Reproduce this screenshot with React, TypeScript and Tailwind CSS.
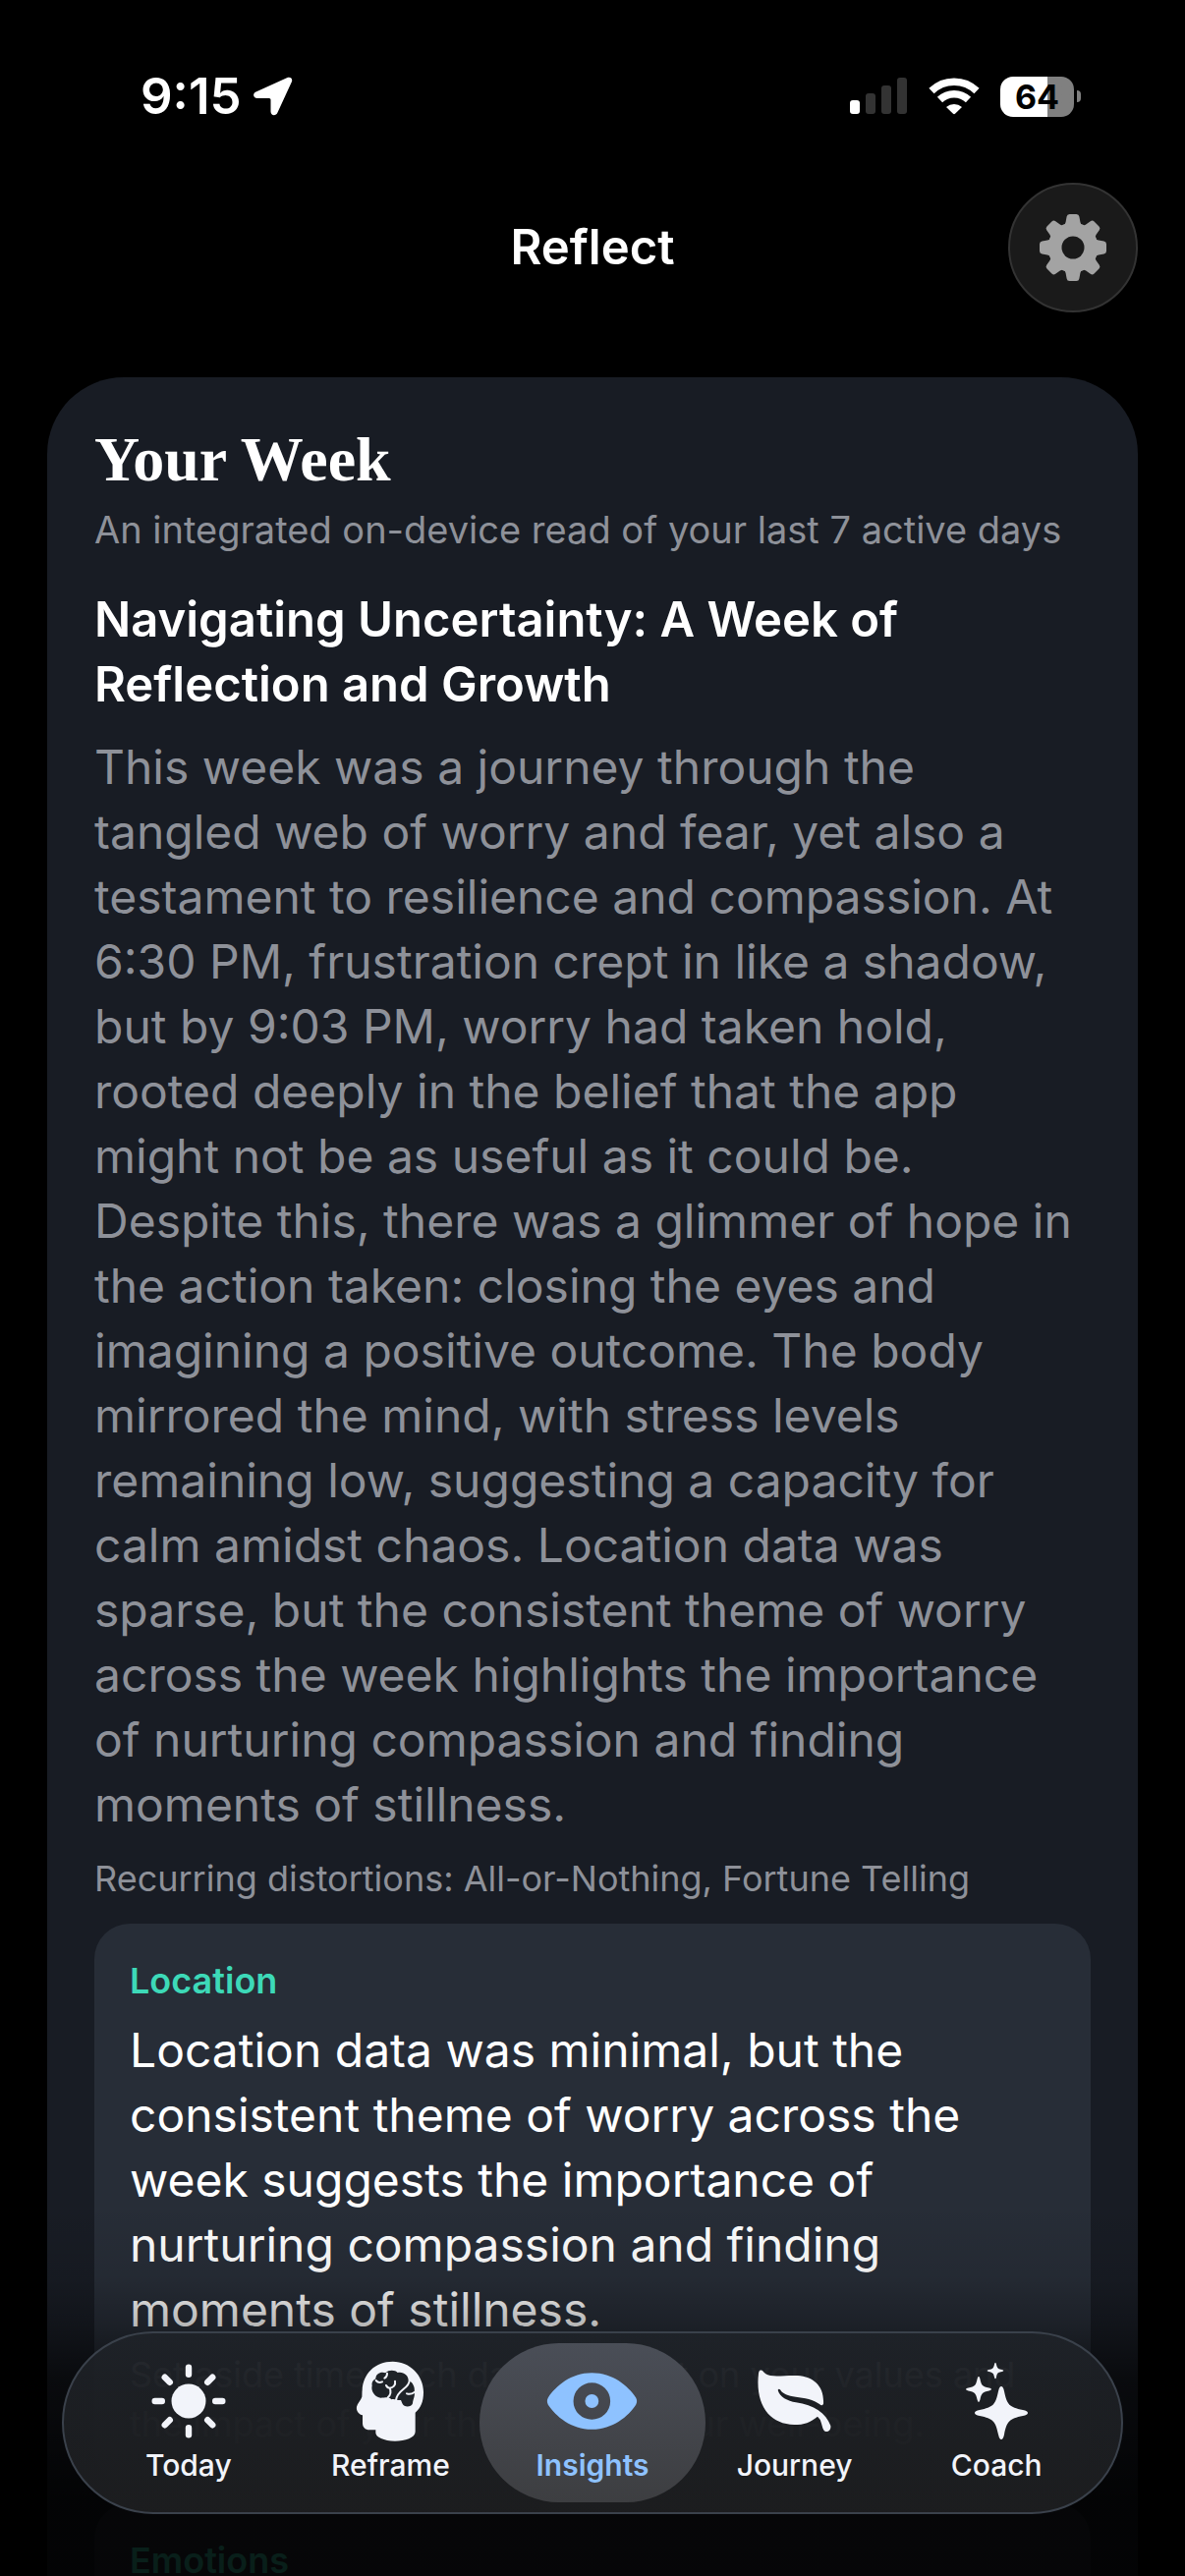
import React, { useState } from 'react';

interface Insight {
  title: string;
  text?: string;
  note?: string;
}

interface Tab {
  id: string;
  label: string;
  icon: React.ReactNode;
}

const insights: Insight[] = [
  {
    title: 'Location',
    text: 'Location data was minimal, but the consistent theme of worry across the week suggests the importance of nurturing compassion and finding moments of stillness.',
    note: 'Set aside time each day to reflect on your values and the impact of your thoughts on your well-being.',
  },
  { title: 'Emotions' },
];

const angles = [0, 45, 90, 135, 180, 225, 270, 315];

const SunIcon = () => (
  <svg width="76" height="76" viewBox="-38 -38 76 76" fill="currentColor" aria-hidden="true">
    <circle r="17.5" />
    {angles.map((a) => (
      <rect key={a} x="-3.2" y="-37.5" width="6.4" height="13.5" rx="3.2" transform={`rotate(${a})`} />
    ))}
  </svg>
);

const HeadIcon = () => (
  <svg width="70" height="82" viewBox="694 70 210 246" aria-hidden="true">
    <path
      fill="currentColor"
      d="M807 72C860 72 901 115 901 165C901 195 893 212 876 228V286C876 305 845 315 814 315C780 315 755 303 755 290V281H737C722 281 715 273 715 260V236C703 233 695 222 697 210C699 200 710 190 713 180C714 170 713 165 714 160C716 110 752 72 807 72Z"
    />
    <path
      fill="#1f2328"
      d="M755 125C755 108 772 102 785 107C795 96 815 98 822 106C840 102 855 115 855 129C868 135 876 150 873 165C876 178 869 186 868 200C864 212 842 214 836 200L832 190C822 192 812 184 803 188C795 179 786 183 770 183C750 180 740 160 744 146C742 135 748 128 755 125Z"
    />
    <g fill="none" stroke="currentColor" strokeWidth="6" strokeLinecap="round">
      <path d="M756 130C761 136 768 137 775 134" />
      <path d="M790 108C790 115 786 121 782 123" />
      <path d="M814 132C817 145 808 152 798 153C792 153 789 149 787 145M798 153C803 165 799 176 792 182" />
      <path d="M858 130C858 155 820 158 817 190" />
      <path d="M873 166C865 172 856 172 850 170" />
    </g>
  </svg>
);

const EyeIcon = () => (
  <svg width="93" height="58" viewBox="171 107 279 176" fill="currentColor" aria-hidden="true">
    <path
      fillRule="evenodd"
      d="M175 184C200 148 245 108 310 108C375 108 422 148 446 184Q452 195 446 206C422 242 375 282 310 282C245 282 200 242 175 206Q169 195 175 184ZM310 138A57 57 0 1 0 310 252A57 57 0 1 0 310 138Z"
    />
    <circle cx="310" cy="195" r="21" />
  </svg>
);

const LeafIcon = () => (
  <svg width="75" height="64" viewBox="813 101 225 192" fill="currentColor" aria-hidden="true">
    <path d="M820 103C828 100 830 108 838 114C855 126 900 117 935 119C985 122 1017 152 1014 205Q1010 213 1003 207C985 192 955 187 930 184C905 180 890 175 883 163Q878 157 875 163C880 185 905 196 930 201C985 208 1022 235 1036 272C1038 285 1030 291 1022 290C1014 288 1012 280 1008 265Q1004 250 996 244C975 262 955 269 925 269C850 268 805 210 816 112Q817 105 820 103Z" />
  </svg>
);

const star =
  'M0 -27Q2 -27 3 -22C6 -8 8 -6 22 -3Q27 -2 27 0Q27 2 22 3C8 6 6 8 3 22Q2 27 0 27Q-2 27 -3 22C-6 8 -8 6 -22 3Q-27 2 -27 0Q-27 -2 -22 -3C-8 -6 -6 -8 -3 -22Q-2 -27 0 -27Z';

const SparklesIcon = () => (
  <svg width="66" height="80" viewBox="0 0 66 80" fill="currentColor" aria-hidden="true">
    <path d={star} transform="translate(38 52)" />
    <path d={star} transform="translate(15 28) scale(.48)" />
    <path d={star} transform="translate(32 9) scale(.31)" />
  </svg>
);

const GearIcon = () => (
  <svg width="68" height="68" viewBox="-34 -34 68 68" aria-hidden="true">
    <g fill="#a3a3a3">
      <circle r="25.5" />
      {angles.map((a) => (
        <path key={a} d="M-10 -22Q-8 -23 -7.4 -26L-6.4 -31.5Q-6 -34 -3.5 -34H3.5Q6 -34 6.4 -31.5L7.4 -26Q8 -23 10 -22Z" transform={`rotate(${a})`} />
      ))}
    </g>
    <circle r="11.5" fill="#1a1a1a" />
  </svg>
);

const tabs: Tab[] = [
  { id: 'today', label: 'Today', icon: <SunIcon /> },
  { id: 'reframe', label: 'Reframe', icon: <HeadIcon /> },
  { id: 'insights', label: 'Insights', icon: <EyeIcon /> },
  { id: 'journey', label: 'Journey', icon: <LeafIcon /> },
  { id: 'coach', label: 'Coach', icon: <SparklesIcon /> },
];

const StatusBar = () => (
  <div className="flex items-center justify-between pt-[66px] pr-[106px] pl-[143px]">
    <div className="flex items-center gap-3">
      <span className="text-[51px] leading-[64px] font-semibold">9:15</span>
      <svg width="40" height="40" viewBox="0 0 40 40" fill="#fff" aria-hidden="true">
        <path d="M34.5 1C37.5 -.2 40 2 39 5L24.5 36.5C23 40.5 17.5 40 17.5 35.5V23.5Q17.5 22 16 22H4C-.5 22 -1.2 17 2.5 15.5Z" />
      </svg>
    </div>
    <div className="flex items-center gap-[21px]">
      <svg width="59" height="38" viewBox="0 0 59 38" aria-hidden="true">
        <rect x="0" y="23" width="10" height="14" rx="3" fill="#fff" />
        <rect x="16" y="16" width="10" height="21" rx="3" fill="#333" />
        <rect x="32" y="8" width="10" height="29" rx="3" fill="#333" />
        <rect x="48" y="0" width="10" height="37" rx="3" fill="#333" />
      </svg>
      <svg width="52" height="38" viewBox="0 0 52 38" aria-hidden="true">
        <g fill="none" stroke="#fff" strokeWidth="7.5">
          <path d="M3 13.5A33 33 0 0 1 49 13.5" />
          <path d="M11.5 22.5A21 21 0 0 1 40.5 22.5" />
        </g>
        <path fill="#fff" d="M18 30A12 12 0 0 1 34 30L27 36.7Q26 37.6 25 36.7Z" />
      </svg>
      <div className="flex items-center gap-[3px]">
        <div className="flex h-[41px] w-[75px] items-center justify-center rounded-[13px] bg-linear-to-r from-white from-64% to-[#808080] to-64% text-[34px] font-bold text-black">
          64
        </div>
        <div className="h-3 w-1 rounded-r-full bg-[#808080]" />
      </div>
    </div>
  </div>
);

const InsightCard = ({ insight }: { insight: Insight }) => (
  <article className="min-h-[200px] rounded-[36px] bg-[#272d37] p-9">
    <h4 className="text-[36px] leading-[44px] font-semibold text-[#3dd9b8]">{insight.title}</h4>
    {insight.text && <p className="mt-4 text-[48px] leading-[66px]">{insight.text}</p>}
    {insight.note && <p className="mt-2 text-[36px] leading-[50px] text-[#8e9199]">{insight.note}</p>}
  </article>
);

export default function App() {
  const [activeTab, setActiveTab] = useState('insights');

  return (
    <div className="relative flex h-screen flex-col overflow-hidden bg-black font-['Inter','Liberation_Sans',sans-serif] text-white">
      <StatusBar />

      <header className="grid grid-cols-[132px_1fr_132px] items-center px-12 pt-14">
        <h1 className="col-start-2 text-center text-[49px] leading-[66px] font-semibold">Reflect</h1>
        <button
          type="button"
          aria-label="Settings"
          className="flex size-[132px] items-center justify-center rounded-full border-2 border-[#333] bg-[#1a1a1a]"
        >
          <GearIcon />
        </button>
      </header>

      <main className="mt-[66px] min-h-0 flex-1 overflow-y-auto px-12 [scrollbar-width:none]">
        <section className="rounded-t-[78px] bg-[#181c24] px-12 pt-11 pb-12">
          <h2 className="font-['Liberation_Serif',serif] text-[64px] leading-[80px] font-bold">Your Week</h2>
          <p className="mt-1 text-[38px] leading-[54px] text-[#8e9199]">An integrated on-device read of your last 7 active days</p>
          <h3 className="mt-8 text-[49px] leading-[66px] font-semibold">Navigating Uncertainty: A Week of Reflection and Growth</h3>
          <p className="mt-[18px] text-[48px] leading-[66px] text-[#8e9199]">
            This week was a journey through the tangled web of worry and fear, yet also a testament to resilience and
            compassion. At 6:30 PM, frustration crept in like a shadow, but by 9:03 PM, worry had taken hold, rooted
            deeply in the belief that the app might not be as useful as it could be. Despite this, there was a glimmer
            of hope in the action taken: closing the eyes and imagining a positive outcome. The body mirrored the mind,
            with stress levels remaining low, suggesting a capacity for calm amidst chaos. Location data was sparse,
            but the consistent theme of worry across the week highlights the importance of nurturing compassion and
            finding moments of stillness.
          </p>
          <p className="mt-[18px] text-[36px] leading-[48px] text-[#8e9199]">Recurring distortions: All-or-Nothing, Fortune Telling</p>
          <div className="mt-[22px] flex flex-col gap-5">
            {insights.map((insight) => (
              <InsightCard key={insight.title} insight={insight} />
            ))}
          </div>
        </section>
      </main>

      {/* content fades out behind the tab bar */}
      <div className="pointer-events-none absolute inset-x-0 bottom-0 h-[400px] bg-[linear-gradient(to_bottom,transparent_5%,rgb(0_0_0/0.08)_24%,rgb(0_0_0/0.28)_36%,rgb(0_0_0/0.62)_50%,rgb(0_0_0/0.86)_80%)]" />

      <nav className="absolute inset-x-[63px] bottom-[63px] flex rounded-full border-2 border-[#3a414b] bg-linear-to-b from-[#1f2329]/85 to-[#1d1e20]/95 px-6 py-[10px] text-[#f2f4fa]">
        {tabs.map((tab) => (
          <button
            key={tab.id}
            type="button"
            onClick={() => setActiveTab(tab.id)}
            aria-current={activeTab === tab.id ? 'page' : undefined}
            className={`relative flex h-[162px] flex-1 flex-col items-center pt-[17px] ${activeTab === tab.id ? 'font-semibold text-[#8ec2ff]' : 'font-medium'}`}
          >
            {activeTab === tab.id && (
              <span className="absolute -inset-x-3 inset-y-0 rounded-full bg-linear-to-b from-[#4a4e57] to-[#3d3e41]" />
            )}
            <span className="relative flex h-[84px] items-center">{tab.icon}</span>
            <span className="relative mt-1 text-[30px] leading-[38px]">{tab.label}</span>
          </button>
        ))}
      </nav>
    </div>
  );
}
